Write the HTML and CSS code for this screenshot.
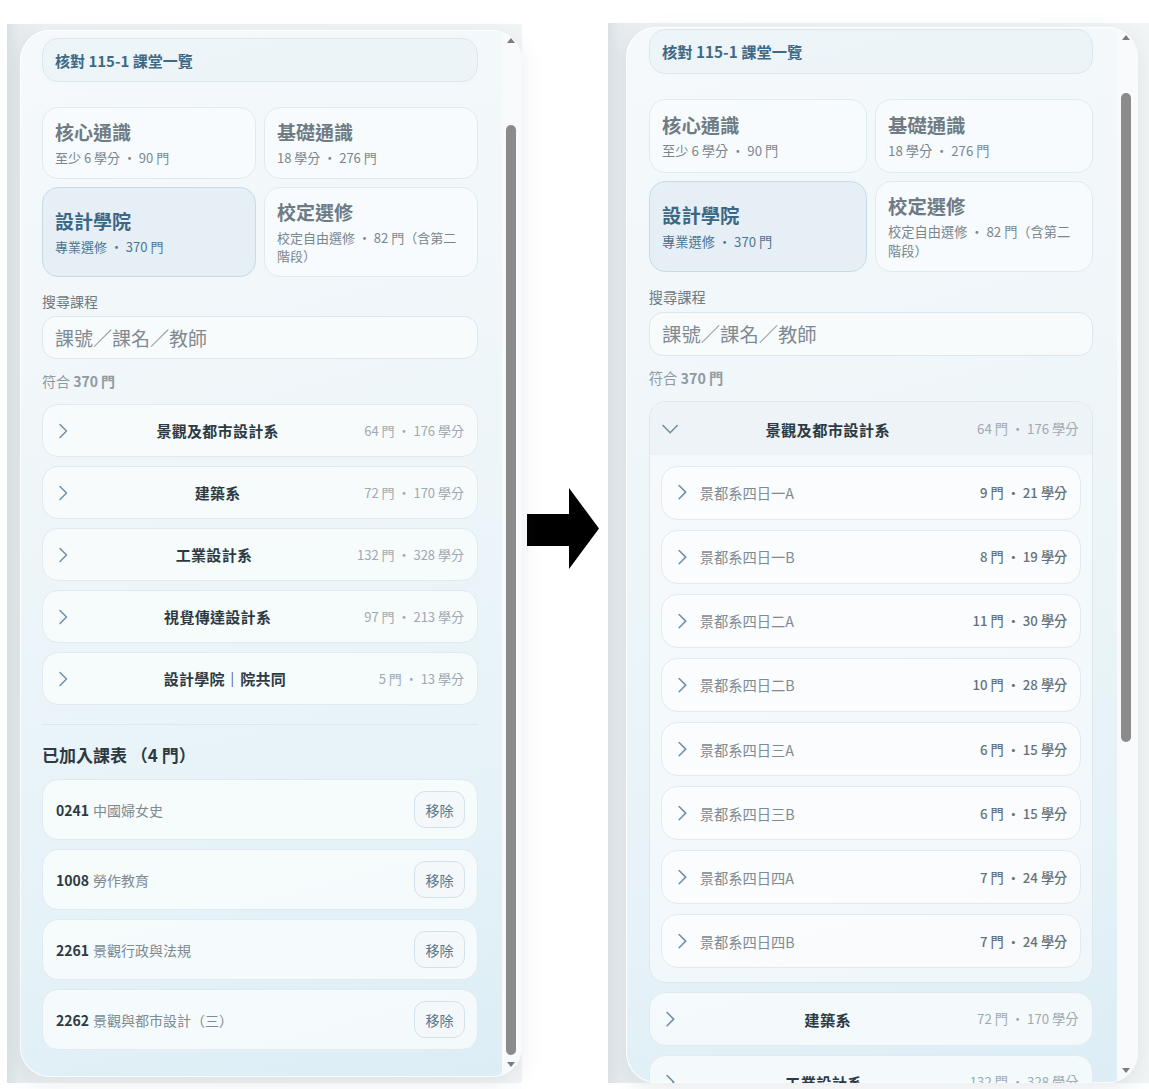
FILE: index.html
```html
<!DOCTYPE html>
<html lang="zh-Hant">
<head>
<meta charset="utf-8">
<title>課表規劃</title>
<link rel="stylesheet" href="styles.css">
</head>
<body>
<div class="stage">

  <!-- Screen 1: collapsed department list -->
  <section class="frame frame--left">
    <div class="card">
      <div class="panel-body">
        <div class="top">核對 115-1 課堂一覽</div>

        <div class="cats">
          <div class="cat"><div class="cat-title">核心通識</div><div class="cat-sub">至少 6 學分 ・ 90 門</div></div>
          <div class="cat"><div class="cat-title">基礎通識</div><div class="cat-sub">18 學分 ・ 276 門</div></div>
          <div class="cat cat--active"><div class="cat-title">設計學院</div><div class="cat-sub">專業選修 ・ 370 門</div></div>
          <div class="cat"><div class="cat-title">校定選修</div><div class="cat-sub">校定自由選修 ・ 82 門（含第二階段）</div></div>
        </div>

        <div class="label">搜尋課程</div>
        <input class="search" type="text" placeholder="課號／課名／教師">
        <div class="count">符合 <b>370 門</b></div>

        <div class="dept-list">
          <div class="row"><svg class="chev" viewBox="0 0 16 16"><path d="M5 1.5 11.5 8 5 14.5"/></svg><span class="row-name">景觀及都市設計系</span><span class="row-meta">64 門 ・ 176 學分</span></div>
          <div class="row"><svg class="chev" viewBox="0 0 16 16"><path d="M5 1.5 11.5 8 5 14.5"/></svg><span class="row-name">建築系</span><span class="row-meta">72 門 ・ 170 學分</span></div>
          <div class="row"><svg class="chev" viewBox="0 0 16 16"><path d="M5 1.5 11.5 8 5 14.5"/></svg><span class="row-name">工業設計系</span><span class="row-meta">132 門 ・ 328 學分</span></div>
          <div class="row"><svg class="chev" viewBox="0 0 16 16"><path d="M5 1.5 11.5 8 5 14.5"/></svg><span class="row-name">視覺傳達設計系</span><span class="row-meta">97 門 ・ 213 學分</span></div>
          <div class="row"><svg class="chev" viewBox="0 0 16 16"><path d="M5 1.5 11.5 8 5 14.5"/></svg><span class="row-name">設計學院｜院共同</span><span class="row-meta">5 門 ・ 13 學分</span></div>
        </div>

        <div class="divider"></div>
        <h2 class="section-title">已加入課表 （4 門）</h2>

        <div class="course-list">
          <div class="course"><span class="course-code">0241</span><span class="course-name">中國婦女史</span><button class="btn">移除</button></div>
          <div class="course"><span class="course-code">1008</span><span class="course-name">勞作教育</span><button class="btn">移除</button></div>
          <div class="course"><span class="course-code">2261</span><span class="course-name">景觀行政與法規</span><button class="btn">移除</button></div>
          <div class="course"><span class="course-code">2262</span><span class="course-name">景觀與都市設計（三）</span><button class="btn">移除</button></div>
        </div>
      </div>

      <div class="scrollbar">
        <span class="sb-arrow sb-arrow--up"></span>
        <span class="sb-thumb" style="top:95px;height:930px"></span>
        <span class="sb-arrow sb-arrow--down"></span>
      </div>
    </div>
  </section>

  <svg class="arrow" viewBox="0 0 72 81"><path d="M0 26H42V0L72 40.5 42 81V58H0Z"/></svg>

  <!-- Screen 2: first department expanded -->
  <section class="frame frame--right">
    <div class="card card--short">
      <div class="panel-body panel-body--scrolled">
        <div class="top">核對 115-1 課堂一覽</div>

        <div class="cats">
          <div class="cat"><div class="cat-title">核心通識</div><div class="cat-sub">至少 6 學分 ・ 90 門</div></div>
          <div class="cat"><div class="cat-title">基礎通識</div><div class="cat-sub">18 學分 ・ 276 門</div></div>
          <div class="cat cat--active"><div class="cat-title">設計學院</div><div class="cat-sub">專業選修 ・ 370 門</div></div>
          <div class="cat"><div class="cat-title">校定選修</div><div class="cat-sub">校定自由選修 ・ 82 門（含第二階段）</div></div>
        </div>

        <div class="label">搜尋課程</div>
        <input class="search" type="text" placeholder="課號／課名／教師">
        <div class="count">符合 <b>370 門</b></div>

        <div class="dept-list">
          <div class="group">
            <div class="group-head"><svg class="chev" viewBox="0 0 16 16"><path d="M1 4.5 8 11.5 15 4.5"/></svg><span class="row-name">景觀及都市設計系</span><span class="row-meta">64 門 ・ 176 學分</span></div>
            <div class="group-body">
              <div class="sub"><svg class="chev" viewBox="0 0 16 16"><path d="M5 1.5 11.5 8 5 14.5"/></svg><span class="sub-name">景都系四日一A</span><span class="sub-meta">9 門 ・ 21 學分</span></div>
              <div class="sub"><svg class="chev" viewBox="0 0 16 16"><path d="M5 1.5 11.5 8 5 14.5"/></svg><span class="sub-name">景都系四日一B</span><span class="sub-meta">8 門 ・ 19 學分</span></div>
              <div class="sub"><svg class="chev" viewBox="0 0 16 16"><path d="M5 1.5 11.5 8 5 14.5"/></svg><span class="sub-name">景都系四日二A</span><span class="sub-meta">11 門 ・ 30 學分</span></div>
              <div class="sub"><svg class="chev" viewBox="0 0 16 16"><path d="M5 1.5 11.5 8 5 14.5"/></svg><span class="sub-name">景都系四日二B</span><span class="sub-meta">10 門 ・ 28 學分</span></div>
              <div class="sub"><svg class="chev" viewBox="0 0 16 16"><path d="M5 1.5 11.5 8 5 14.5"/></svg><span class="sub-name">景都系四日三A</span><span class="sub-meta">6 門 ・ 15 學分</span></div>
              <div class="sub"><svg class="chev" viewBox="0 0 16 16"><path d="M5 1.5 11.5 8 5 14.5"/></svg><span class="sub-name">景都系四日三B</span><span class="sub-meta">6 門 ・ 15 學分</span></div>
              <div class="sub"><svg class="chev" viewBox="0 0 16 16"><path d="M5 1.5 11.5 8 5 14.5"/></svg><span class="sub-name">景都系四日四A</span><span class="sub-meta">7 門 ・ 24 學分</span></div>
              <div class="sub"><svg class="chev" viewBox="0 0 16 16"><path d="M5 1.5 11.5 8 5 14.5"/></svg><span class="sub-name">景都系四日四B</span><span class="sub-meta">7 門 ・ 24 學分</span></div>
            </div>
          </div>
          <div class="row"><svg class="chev" viewBox="0 0 16 16"><path d="M5 1.5 11.5 8 5 14.5"/></svg><span class="row-name">建築系</span><span class="row-meta">72 門 ・ 170 學分</span></div>
          <div class="row"><svg class="chev" viewBox="0 0 16 16"><path d="M5 1.5 11.5 8 5 14.5"/></svg><span class="row-name">工業設計系</span><span class="row-meta">132 門 ・ 328 學分</span></div>
        </div>
      </div>

      <div class="scrollbar">
        <span class="sb-arrow sb-arrow--up"></span>
        <span class="sb-thumb" style="top:65px;height:637px"></span>
        <span class="sb-arrow sb-arrow--down"></span>
      </div>
    </div>
  </section>

</div>
</body>
</html>
```

FILE: styles.css
```css
* { box-sizing: border-box; }

html, body {
  margin: 0;
  background: #ffffff;
}

body {
  font-family: "Noto Sans CJK TC", "Noto Sans", sans-serif;
  color: #2d3a43;
}

.stage {
  display: flex;
  align-items: flex-start;
  width: 1149px;
  height: 1089px;
  padding: 23px 0 0 7px;
  overflow: hidden;
}

/* ---------- device frames ---------- */
.frame {
  flex: none;
  background: linear-gradient(90deg, #d9e1e5 0, #e6ebee 12px, #eff2f4 40px, #f2f5f6 100%);
}

.frame--left {
  margin-top: 1px;
  width: 515px;
  height: 1059px;
  padding: 6px 0 0 13px;
}

.frame--right {
  margin-left: 9px;
  zoom: 1.018;
  width: 531px;
  height: 1041px;
  padding: 4px 0 0 18px;
}

.card {
  position: relative;
  width: 502px;
  height: 1047px;
  border-radius: 30px;
  overflow: hidden;
  background: linear-gradient(165deg, #f5f9fb 0%, #eff6f9 40%, #e5f2f8 78%, #dcedf5 100%);
  box-shadow: inset 0 0 0 1px rgba(255, 255, 255, 0.85), 0 6px 22px rgba(70, 95, 110, 0.12);
}

.card--short { height: 1037px; }

.panel-body {
  padding: 8px 44px 27px 22px;
}

.panel-body--scrolled { padding-top: 2px; }

/* ---------- header ---------- */
.top {
  display: flex;
  align-items: center;
  height: 44px;
  padding: 0 12px;
  border: 1px solid #dae7ee;
  border-radius: 16px;
  background: rgba(235, 243, 247, 0.75);
  font-size: 15px;
  font-weight: 700;
  color: #3f6a87;
}

/* ---------- category tiles ---------- */
.cats {
  display: grid;
  grid-template-columns: 1fr 1fr;
  gap: 8px;
  margin-top: 25px;
}

.cat {
  display: flex;
  flex-direction: column;
  justify-content: center;
  padding: 12px 12px 11px;
  border: 1px solid #dfeaf0;
  border-radius: 16px;
  background: rgba(250, 252, 253, 0.72);
}

.cat--active {
  background: #e6eff5;
  border-color: #c7dbe6;
}

.cat-title {
  font-size: 19px;
  line-height: 24px;
  font-weight: 700;
  color: #6e7b84;
}

.cat-sub {
  margin-top: 5px;
  font-size: 13px;
  line-height: 18px;
  color: #7a868f;
}

.cat--active .cat-title { color: #3b6684; }
.cat--active .cat-sub { color: #4c7493; }

/* ---------- search ---------- */
.label {
  margin-top: 14px;
  font-size: 14px;
  line-height: 20px;
  color: #6f7b84;
}

.search {
  display: block;
  width: 100%;
  height: 43px;
  margin-top: 5px;
  padding: 0 12px;
  border: 1px solid #dbe7ee;
  border-radius: 14px;
  background: rgba(250, 252, 253, 0.78);
  font: 19px "Noto Sans CJK TC", "Noto Sans", sans-serif;
  color: #2d3a43;
  outline: none;
}

.search::placeholder { color: #7f8a92; }

.count {
  margin-top: 12px;
  font-size: 14px;
  line-height: 20px;
  color: #8f9aa1;
}

.count b { font-weight: 700; }

/* ---------- department list ---------- */
.dept-list {
  display: flex;
  flex-direction: column;
  gap: 9px;
  margin-top: 13px;
}

.row,
.group-head {
  display: flex;
  align-items: center;
  height: 53px;
  padding: 0 13px 0 12px;
}

.row {
  border: 1px solid #e0eaf0;
  border-radius: 16px;
  background: rgba(249, 252, 253, 0.8);
}

.chev {
  flex: none;
  width: 16px;
  height: 16px;
  fill: none;
  stroke: #6f8fa8;
  stroke-width: 1.5;
  stroke-linecap: round;
  stroke-linejoin: round;
}

.row-name {
  flex: 1;
  text-align: center;
  font-size: 15px;
  font-weight: 700;
  letter-spacing: 0.3px;
  color: #2d3a43;
}

.row-meta {
  font-size: 13px;
  color: #9fa9b0;
}

.group {
  border: 1px solid #dde9ef;
  border-radius: 16px;
  overflow: hidden;
  background: rgba(250, 252, 253, 0.6);
}

.group-head {
  height: 52px;
  background: #edf3f6;
}

.group-body {
  display: flex;
  flex-direction: column;
  gap: 10px;
  padding: 10px 11px 13px;
}

.sub {
  display: flex;
  align-items: center;
  height: 53px;
  padding: 0 12px;
  border: 1px solid #e0eaf0;
  border-radius: 16px;
  background: rgba(250, 252, 253, 0.88);
}

.sub .chev { margin-right: 9px; }

.sub-name {
  flex: 1;
  font-size: 14px;
  color: #7f8a92;
}

.sub-meta {
  font-size: 13px;
  font-weight: 500;
  color: #66727b;
}

/* ---------- selected courses ---------- */
.divider {
  height: 1px;
  margin-top: 19px;
  background: #dbe7ed;
}

.section-title {
  margin: 18px 0 0;
  font-size: 17px;
  line-height: 24px;
  font-weight: 700;
  color: #2d3a43;
}

.course-list {
  display: flex;
  flex-direction: column;
  gap: 9px;
  margin-top: 12px;
}

.course {
  display: flex;
  align-items: center;
  height: 61px;
  padding: 0 12px 0 13px;
  border: 1px solid #e0eaf0;
  border-radius: 16px;
  background: rgba(249, 252, 253, 0.82);
}

.course-code {
  margin-right: 4px;
  font-size: 14px;
  font-weight: 700;
  color: #2d3a43;
}

.course-name {
  flex: 1;
  font-size: 14px;
  color: #7f8a92;
}

.btn {
  width: 51px;
  height: 37px;
  padding: 0;
  border: 1px solid #d3e2ea;
  border-radius: 11px;
  background: #f4f8fa;
  font: 14px "Noto Sans CJK TC", "Noto Sans", sans-serif;
  color: #56778f;
}

/* ---------- scrollbar overlay ---------- */
.scrollbar {
  position: absolute;
  top: 0;
  right: 0;
  bottom: 0;
  width: 20px;
  background: #f8fafb;
}

.sb-thumb {
  position: absolute;
  left: 4px;
  width: 10px;
  border-radius: 5px;
  background: #8b8b8b;
}

.sb-arrow {
  position: absolute;
  left: 4.5px;
  width: 0;
  height: 0;
  border-left: 4.5px solid transparent;
  border-right: 4.5px solid transparent;
}

.sb-arrow--up {
  top: 8px;
  border-bottom: 5px solid #7b7b7b;
}

.sb-arrow--down {
  bottom: 10px;
  border-top: 5px solid #7b7b7b;
}

/* ---------- transition arrow ---------- */
.arrow {
  flex: none;
  width: 72px;
  height: 81px;
  margin: 465px 0 0 5px;
  fill: #000000;
}
```
